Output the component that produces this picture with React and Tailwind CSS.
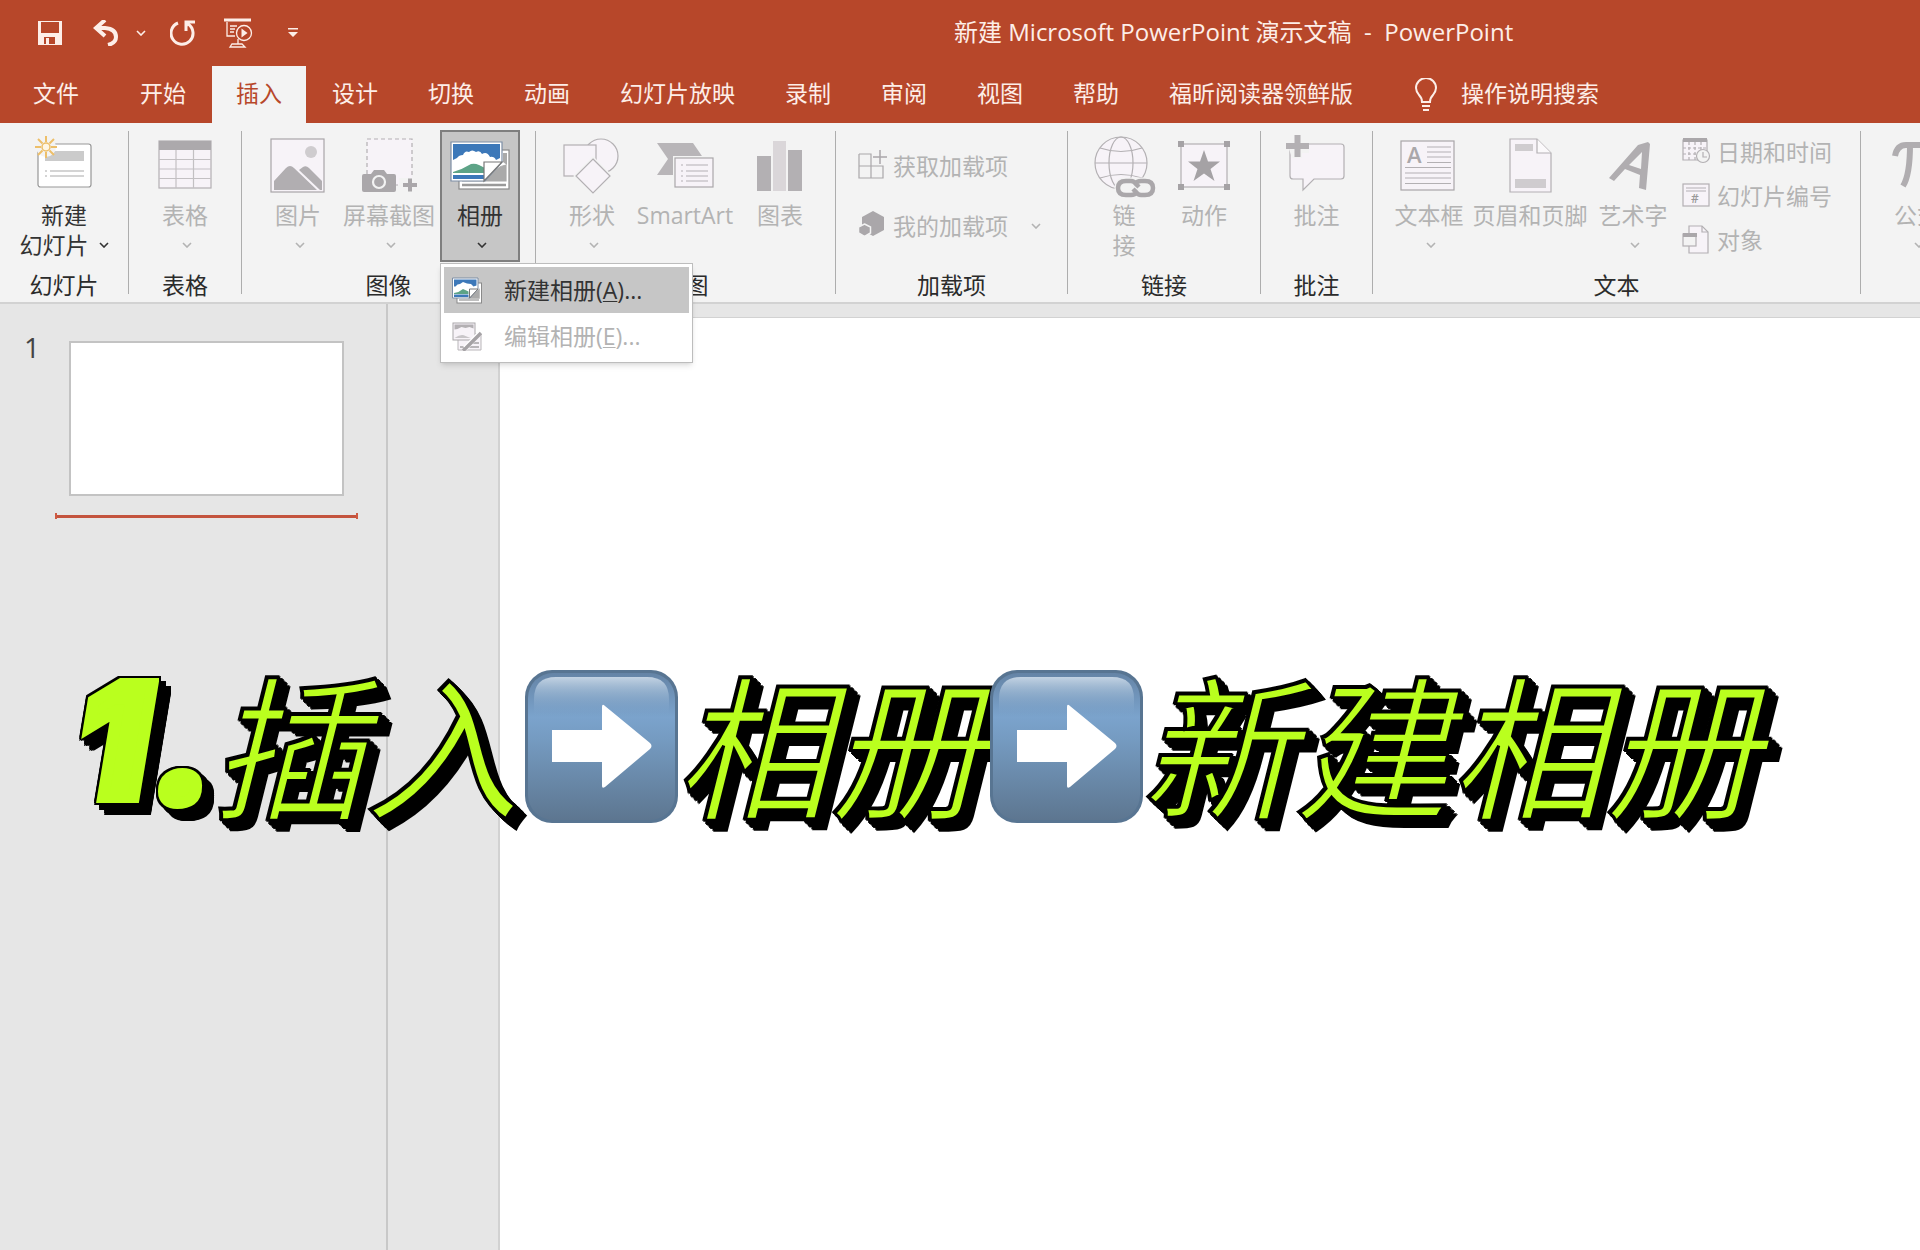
import clsx from 'clsx'

const Chevron = ({ className }) => (
    <svg viewBox="0 0 10 6" className={clsx('w-[10px] h-[6px] shrink-0', className)} fill="none" stroke="currentColor" strokeWidth="1.6">
        <path d="M1 1l4 4 4-4" />
    </svg>
)

const Icon = ({ children }) => (
    <svg viewBox="0 0 60 60" className="w-[60px] h-[60px] shrink-0 overflow-visible" fill="none" stroke="#b3b0b3" strokeWidth="1.2">
        {children}
    </svg>
)

const SmallIcon = ({ children }) => (
    <svg viewBox="0 0 30 30" className="w-[30px] h-[30px] shrink-0 overflow-visible" fill="none" stroke="#b3b0b3" strokeWidth="1.2">
        {children}
    </svg>
)

const NewSlideIcon = () => (
    <Icon>
        <rect x="4" y="8" width="53" height="43" rx="2.5" fill="#fff" stroke="#979797" />
        <path d="M11 15h39v10H11z" fill="#cbcbcb" stroke="none" />
        <path d="M16 35h34M16 40h34" stroke="#a9a9a9" />
        <path d="M11 35h2M11 40h2" stroke="#a9a9a9" />
        <circle cx="12" cy="11" r="10" fill="#f3f3f3" stroke="none" />
        <path d="M12 0v6M12 16v6M1 11h6M17 11h6M4 3l4.500 4.500M15.500 14.500L20 19M20 3l-4.500 4.500M8.500 14.500L4 19" stroke="#edbf6a" strokeWidth="2" />
        <circle cx="12" cy="11" r="4" fill="#fff6e4" stroke="#edbf6a" strokeWidth="1.500" />
    </Icon>
)

const TableIcon = () => (
    <Icon>
        <rect x="4" y="5" width="52" height="47" fill="#f7f3f8" />
        <path d="M4 5h52v9H4z" fill="#aca9ac" stroke="none" />
        <path d="M21 14v38M38.500 14v38M4 23.500h52M4 33h52M4 42.500h52" stroke="#c3c0c3" />
    </Icon>
)

const PictureIcon = () => (
    <Icon>
        <rect x="3" y="3" width="53" height="53" fill="#f7f3f8" stroke="#a9a6a9" />
        <circle cx="43" cy="16" r="6" fill="#cfcccf" stroke="none" />
        <path d="M6 54V45l12-13q4-4 8 0l23 22z" fill="#b1aeb1" stroke="none" />
        <path d="M31 34l4-3q3-2 6 1l13 13v9h-2z" fill="#b1aeb1" stroke="none" />
    </Icon>
)

const ScreenshotIcon = () => (
    <Icon>
        <path d="M8 3h45v46H8z" fill="#f7f3f8" strokeDasharray="4 3" />
        <path d="M5 38h7l3-4h10l3 4h7q2 0 2 2v14q0 2-2 2H5q-2 0-2-2V40q0-2 2-2z" fill="#aaa7aa" stroke="none" />
        <circle cx="20" cy="46" r="6" stroke="#f3f3f3" strokeWidth="2.200" />
        <path d="M40 42h20v14H40z" fill="#f3f3f3" stroke="none" />
        <path d="M51 42.500v13M44 49h14" stroke="#aaa7aa" strokeWidth="4" />
    </Icon>
)

const AlbumIcon = () => (
    <Icon>
        <rect x="9" y="14" width="50" height="39" fill="#fff" stroke="#8a8a8a" />
        <path d="M12 45h44M36 45q10-15 20-16v16z" fill="#aaa" stroke="#aaa" />
        <path d="M12 49h44" stroke="#999" strokeWidth="2.500" />
        <path d="M53 17h4v12l-4-3z" fill="#aaa" stroke="none" />
        <path d="M1 6h51v20L35 45H1z" fill="#fff" stroke="#7c8ea5" />
        <path d="M3 8h47v14l-4 2q-2-4-6-3-3-6-8-3-2-4-6-2-4-3-7 0-4-2-6 3-4 0-6 3l-4 2z" fill="#3c78b9" stroke="none" />
        <path d="M3 36q10-3 18-8 4-1 8 1l6 3v5H3z" fill="#5da387" stroke="none" />
        <path d="M3 39h31v4H3z" fill="#3c78b9" stroke="none" />
        <path d="M34 26h18L34 45z" fill="#fff" stroke="#777" />
    </Icon>
)

const ShapesIcon = () => (
    <Icon>
        <circle cx="39" cy="20" r="17" fill="#f7f3f8" />
        <rect x="2" y="9" width="32" height="31" fill="#f7f3f8" />
        <path d="M31 23l17 17-17 17-17-17z" fill="#f7f3f8" stroke="#f3f3f3" strokeWidth="4" />
        <path d="M31 23l17 17-17 17-17-17z" fill="#f7f3f8" />
    </Icon>
)

const SmartArtIcon = () => (
    <Icon>
        <path d="M2 7h36l11 16-11 16H2l11-16z" fill="#b8b5b8" stroke="none" />
        <rect x="20" y="22" width="38" height="29" fill="#f7f3f8" stroke="#f3f3f3" strokeWidth="4" />
        <rect x="20" y="22" width="38" height="29" fill="#f7f3f8" stroke="#aaa7aa" />
        <path d="M26 29h2M31 29h22M26 35h2M31 35h22M26 40h2M31 40h22M26 45h2M31 45h22" />
    </Icon>
)

const ChartIcon = () => (
    <Icon>
        <path d="M7 20h14v35H7zM38 14h14v41H38z" fill="#b3b0b3" stroke="none" />
        <path d="M23 5h13v50H23z" fill="#dad6d9" stroke="none" />
    </Icon>
)

const GlobeIcon = () => (
    <Icon>
        <circle cx="27" cy="27" r="26" fill="#f7f3f8" />
        <ellipse cx="27" cy="27" rx="12" ry="26" />
        <path d="M1 27h52M6 12q21 7 42 0M6 42q21-7 42 0" />
        <path d="M31 43h21q8 0 8 9t-8 9H31q-9 0-9-9t9-9z" fill="#f3f3f3" stroke="#f3f3f3" strokeWidth="3" />
        <path d="M43 56q-2 3-6 3h-5q-8 0-8-7t8-7h5q3 0 5 3l3 3" stroke="#aaa7aa" strokeWidth="4.500" />
        <path d="M41 48q2-3 6-3h4q8 0 8 7t-8 7h-4q-3 0-5-3l-3-3" stroke="#aaa7aa" strokeWidth="4.500" />
    </Icon>
)

const ActionIcon = () => (
    <Icon>
        <rect x="7" y="8" width="46" height="43" fill="#f7f3f8" />
        <path d="M4 5h6v6H4zM50 5h6v6h-6zM4 48h6v6H4zM50 48h6v6h-6z" fill="#a5a2a5" stroke="none" />
        <path d="M30 14l4 11.500h12l-9.500 7.500 4 12L30 37.500 19.500 45l4-12L14 25.500h12z" fill="#a5a2a5" stroke="none" />
    </Icon>
)

const CommentIcon = () => (
    <Icon>
        <path d="M6 8h48q3 0 3 3v29q0 3-3 3H27L16 54V43H6q-3 0-3-3V11q0-3 3-3z" fill="#f7f3f8" />
        <path d="M-1 4h7v-6h9v6h7v13h-7v5H5z" fill="#f3f3f3" stroke="none" />
        <path d="M10.500-1v22M-1 10h23" stroke="#b3b0b3" strokeWidth="6" />
    </Icon>
)

const TextBoxIcon = () => (
    <Icon>
        <rect x="2" y="5" width="53" height="49" fill="#f7f3f8" stroke="#a9a6a9" />
        <text x="8" y="27" fontSize="22" fill="#aaa7aa" stroke="none" className="font-['Open_Sans'] font-semibold">A</text>
        <path d="M28 11h24M28 16h24M28 21h24M28 26.500h24M6 31.500h46M6 37h46M6 42h46M6 47.500h46" />
    </Icon>
)

const HeaderFooterIcon = () => (
    <Icon>
        <path d="M10 3h27l14 14v39H10z" fill="#f7f3f8" />
        <path d="M37 3v14h14" fill="#fbf9fb" />
        <path d="M15 8h18v7H15zM15 43h31v9H15z" fill="#cfcccf" stroke="none" />
    </Icon>
)

const WordArtIcon = () => (
    <Icon>
        <path d="M6 42l29-33 10-3 2 2-4 46-7-2 1-13-15-6-11 12zM26 29l12 4 1-17z" fill="#b0adb0" fillRule="evenodd" stroke="none" />
    </Icon>
)

const EquationIcon = () => (
    <Icon>
        <path d="M8 20q2-11 11-11h36M23 9q0 30-7 41M42 9q-3 30 1 36 4 5 10-2" stroke="#b0adb0" strokeWidth="6" />
    </Icon>
)

const GetAddinsIcon = () => (
    <SmallIcon>
        <path d="M1 3h12v24M1 3v24h24V15H1" stroke="#aaa7aa" />
        <path d="M22-1v14M15 6h14" stroke="#aaa7aa" strokeWidth="1.500" />
    </SmallIcon>
)

const MyAddinsIcon = () => (
    <SmallIcon>
        <path d="M15 0l11 6v13l-11 6-11-6V6z" fill="#aaa7aa" stroke="none" />
        <path d="M6.500 13l6 3v6l-6 3.500-6-3.500v-6z" fill="#aaa7aa" stroke="#f3f3f3" strokeWidth="1.500" />
    </SmallIcon>
)

const DateIcon = () => (
    <SmallIcon>
        <path d="M1 3h24v20H1z" fill="#f7f3f8" />
        <path d="M1 1h24v4H1z" fill="#aaa7aa" stroke="none" />
        <path d="M7 5v18M13 5v18M19 5v18M1 11h24M1 17h24" strokeDasharray="3 2" />
        <circle cx="21" cy="19" r="6.500" fill="#f3f3f3" />
        <path d="M21 15v5h4" />
    </SmallIcon>
)

const SlideNumberIcon = () => (
    <SmallIcon>
        <rect x="1" y="3" width="26" height="22" fill="#f7f3f8" />
        <path d="M4 7h20M4 10h20" />
        <text x="9" y="22" fontSize="12" fill="#999" stroke="none" className="font-['Open_Sans'] font-semibold">#</text>
    </SmallIcon>
)

const ObjectIcon = () => (
    <SmallIcon>
        <path d="M7 10V1h13l6 6v21H7v-7" fill="#f7f3f8" />
        <path d="M20 1v6h6" />
        <rect x="1" y="9" width="13" height="12" fill="#f3f3f3" />
        <path d="M1 8h14v4H1z" fill="#aaa7aa" stroke="none" />
    </SmallIcon>
)

const NewAlbumIcon = () => (
    <svg viewBox="0 0 60 60" className="w-[30px] h-[30px] shrink-0" fill="none">
        <rect x="10" y="16" width="49" height="40" fill="#fff" stroke="#8a8a8a" strokeWidth="2" />
        <path d="M14 50h40M36 46l18-16v16z" fill="#aaa" stroke="#aaa" strokeWidth="3" />
        <path d="M1 6h51v22L36 46H1z" fill="#fff" stroke="#7c8ea5" strokeWidth="2" />
        <path d="M4 9h45v12l-6 2-5-5-8-1-8-3-6 4-5 1-4 4H4z" fill="#3c78b9" />
        <path d="M4 36q10-1 18-8l11 5v5H4z" fill="#5da387" />
        <path d="M4 39h29v5H4z" fill="#3c78b9" />
        <path d="M35 28h17L35 46z" fill="#fff" stroke="#777" strokeWidth="2" />
    </svg>
)

const EditAlbumIcon = () => (
    <svg viewBox="0 0 60 60" className="w-[30px] h-[30px] shrink-0" fill="none">
        <path d="M12 26h46v32H12z" fill="#f7f3f8" stroke="#b9b6b9" strokeWidth="2" />
        <path d="M16 52h38M40 44h14" stroke="#b9b6b9" strokeWidth="4" />
        <rect x="2" y="4" width="44" height="34" fill="#f7f3f8" stroke="#aaa7aa" strokeWidth="2" />
        <path d="M5 7h38v8l-8-3-8 2-8-2-8 4-6 1z" fill="#b3b0b3" />
        <path d="M5 34q14-10 22-4l10 4z" fill="#c9c6c9" />
        <path d="M56 24L26 55" stroke="#fff" strokeWidth="10" />
        <path d="M58 24L28 54l-6 5" stroke="#a5a2a5" strokeWidth="7" />
    </svg>
)

const ToolButton = ({ icon, lines, width, arrow, inlineArrow, active, enabled }) => (
    <button
        disabled={!enabled}
        className={clsx(
            'flex flex-col items-center h-[132px] pt-1 border-2 leading-[30px] whitespace-nowrap shrink-0',
            width,
            active ? 'bg-[#c6c6c6] border-[#7f7f7f]' : 'border-transparent',
            enabled ? 'text-[#333]' : 'text-[#b3b3b3]'
        )}
    >
        {icon}
        <span className="mt-1">{lines[0]}</span>
        {lines[1] && (
            <span className="flex items-center gap-[10px]">
                {lines[1]}
                {inlineArrow && <Chevron />}
            </span>
        )}
        {arrow && <Chevron className="ml-1 mt-3" />}
    </button>
)

const RowButton = ({ icon, label, height, arrow }) => (
    <button disabled className={clsx('flex items-center gap-[5px] text-[#b3b3b3] whitespace-nowrap', height)}>
        {icon}
        {label}
        {arrow && <Chevron className="ml-[18px]" />}
    </button>
)

const Group = ({ label, width, className, children }) => (
    <>
        <section aria-label={label} className={clsx('flex flex-col justify-between shrink-0 pt-[7px] pb-[5px]', width)}>
            <div className={clsx('flex', className)}>{children}</div>
            <div className="text-center text-[#2b2b2b] leading-6">{label}</div>
        </section>
        <div className="w-px my-2 bg-[#adadad] shrink-0" />
    </>
)

const tabs = ['开始', '插入', '设计', '切换', '动画', '幻灯片放映', '录制', '审阅', '视图', '帮助', '福昕阅读器领鲜版']

const TitleBar = () => (
    <div className="flex items-center h-[66px] pl-[37px] text-[#fdeee8]">
        <button aria-label="保存">
            <svg viewBox="0 0 26 26" className="w-[26px] h-[26px]" fill="none">
                <path d="M1 1h24v24H1z" fill="#fdeee8" />
                <path d="M4 2h18v11H4zM7 17h11v7H7z" fill="#b7472a" />
                <path d="M9 18h3v6H9z" fill="#fdeee8" />
            </svg>
        </button>
        <button aria-label="撤消" className="ml-[30px]">
            <svg viewBox="0 0 26 26" className="w-[26px] h-[26px]" fill="none" stroke="currentColor" strokeWidth="4">
                <path d="M12 0L3 8l9 8M3 8h9q11 1 11 9 0 6-8 8" />
            </svg>
        </button>
        <button aria-label="撤消选项" className="ml-[17px]">
            <Chevron />
        </button>
        <button aria-label="重复" className="ml-6">
            <svg viewBox="0 0 26 26" className="w-[26px] h-[26px]" fill="none" stroke="currentColor" strokeWidth="3">
                <path d="M8 3A11 11 0 1 0 18 4" />
                <path d="M16 11V2h9" />
                <path d="M15 1h7l-7 8z" fill="currentColor" stroke="none" />
            </svg>
        </button>
        <button aria-label="从头开始" className="ml-7">
            <svg viewBox="0 0 30 30" className="w-[30px] h-[30px]" fill="none" stroke="currentColor" strokeWidth="1.300">
                <path d="M0 2h27" strokeWidth="3" />
                <path d="M3 4v14h8M6 8h7M6 11h5M6 14h4M14 21v5M6 29l2-3h10l3 3z" />
                <circle cx="20" cy="15" r="7.500" />
                <path d="M17.500 10.500v9l6-4.500z" fill="currentColor" stroke="none" />
            </svg>
        </button>
        <button aria-label="自定义快速访问工具栏" className="ml-[34px]">
            <svg viewBox="0 0 10 10" className="w-[10px] h-[10px]" fill="currentColor">
                <path d="M0 0h10v1.500H0zM0 4h10L5 9z" />
            </svg>
        </button>
        <h1 className="ml-[656px] text-2xl leading-8 pb-[2px] whitespace-pre">新建 Microsoft PowerPoint 演示文稿  -  PowerPoint</h1>
    </div>
)

const TabBar = () => (
    <div className="flex gap-[2px] h-[57px] text-[#fdeee8] whitespace-nowrap">
        <button className="pl-[33px] pr-[35px] pb-[2px]">文件</button>
        {tabs.map(tab => (
            <button key={tab} className={clsx('px-6 pb-[2px]', tab === '插入' && 'bg-[#f3f3f3] text-[#b7472a]')}>
                {tab}
            </button>
        ))}
        <label className="flex items-center gap-6 pl-9">
            <svg viewBox="0 0 22 34" className="w-[22px] h-[34px]" fill="none" stroke="currentColor" strokeWidth="2">
                <path d="M7 24q0-4-3-7-3-4-3-7a10 10 0 0 1 20 0q0 3-3 7-3 3-3 7zM7 28h8M8 32h6" />
            </svg>
            <input
                type="text"
                aria-label="操作说明搜索"
                placeholder="操作说明搜索"
                className="w-40 pb-[2px] bg-transparent outline-none placeholder:text-[#fdeee8] placeholder:opacity-100"
            />
        </label>
    </div>
)

const AlbumMenu = () => (
    <div role="menu" className="absolute top-[133px] left-0 z-20 w-[253px] p-[3px] bg-white border border-[#bdbdbd] shadow-md">
        <button role="menuitem" className="flex items-center w-full h-[46px] pl-2 gap-[22px] bg-[#c6c6c6] text-[#333] whitespace-nowrap">
            <NewAlbumIcon />
            <span>新建相册(<u className="underline-offset-2 decoration-1">A</u>)...</span>
        </button>
        <button role="menuitem" disabled className="flex items-center w-full h-[46px] pl-2 gap-[22px] text-[#b3b3b3] whitespace-nowrap">
            <EditAlbumIcon />
            <span>编辑相册(<u className="underline-offset-2 decoration-1">E</u>)...</span>
        </button>
    </div>
)

const Ribbon = () => (
    <div className="flex h-[181px] bg-[#f3f3f3] border-b-2 border-[#d2d2d2]">
        <Group label="幻灯片" width="w-[128px]" className="justify-center">
            <ToolButton icon={<NewSlideIcon />} lines={['新建', '幻灯片']} width="w-[126px]" inlineArrow enabled />
        </Group>
        <Group label="表格" width="w-[112px]" className="justify-center">
            <ToolButton icon={<TableIcon />} lines={['表格']} width="w-20" arrow />
        </Group>
        <Group label="图像" width="w-[293px]" className="pl-4 gap-[3px]">
            <ToolButton icon={<PictureIcon />} lines={['图片']} width="w-20" arrow />
            <ToolButton icon={<ScreenshotIcon />} lines={['屏幕截图']} width="w-24" arrow />
            <div className="relative">
                <ToolButton icon={<AlbumIcon />} lines={['相册']} width="w-20" arrow active enabled />
                <AlbumMenu />
            </div>
        </Group>
        <Group label="插图" width="w-[299px]" className="pl-4 gap-[3px]">
            <ToolButton icon={<ShapesIcon />} lines={['形状']} width="w-20" arrow />
            <ToolButton icon={<SmartArtIcon />} lines={['SmartArt']} width="w-[100px]" />
            <ToolButton icon={<ChartIcon />} lines={['图表']} width="w-[84px]" />
        </Group>
        <Group label="加载项" width="w-[231px]" className="flex-col pl-[22px] pt-[6px]">
            <RowButton icon={<GetAddinsIcon />} label="获取加载项" height="h-[60px]" />
            <RowButton icon={<MyAddinsIcon />} label="我的加载项" height="h-[60px]" arrow />
        </Group>
        <Group label="链接" width="w-[192px]" className="pl-4">
            <ToolButton icon={<GlobeIcon />} lines={['链', '接']} width="w-20" />
            <ToolButton icon={<ActionIcon />} lines={['动作']} width="w-20" />
        </Group>
        <Group label="批注" width="w-[111px]" className="justify-center">
            <ToolButton icon={<CommentIcon />} lines={['批注']} width="w-20" />
        </Group>
        <Group label="文本" width="w-[487px]" className="pl-4 gap-[3px]">
            <ToolButton icon={<TextBoxIcon />} lines={['文本框']} width="w-20" arrow />
            <ToolButton icon={<HeaderFooterIcon />} lines={['页眉和页脚']} width="w-[116px]" />
            <ToolButton icon={<WordArtIcon />} lines={['艺术字']} width="w-[84px]" arrow />
            <div className="flex flex-col pl-1">
                <RowButton icon={<DateIcon />} label="日期和时间" height="h-11" />
                <RowButton icon={<SlideNumberIcon />} label="幻灯片编号" height="h-11" />
                <RowButton icon={<ObjectIcon />} label="对象" height="h-11" />
            </div>
        </Group>
        <div className="flex flex-1 min-w-0 pt-[7px] pl-4 overflow-hidden">
            <ToolButton icon={<EquationIcon />} lines={['公式']} width="w-20" arrow />
        </div>
    </div>
)

const ArrowBadge = () => (
    <svg viewBox="0 0 155 155" role="img" aria-label="➡" className="relative w-[155px] h-[155px] shrink-0">
        <defs>
            <linearGradient id="badge" x1="0" y1="0" x2="0" y2="1">
                <stop offset="0" stopColor="#6584a6" />
                <stop offset="0.300" stopColor="#7ba3cc" />
                <stop offset="0.450" stopColor="#759bc1" />
                <stop offset="1" stopColor="#5d7690" />
            </linearGradient>
            <linearGradient id="gloss" x1="0" y1="0" x2="0" y2="1">
                <stop offset="0" stopColor="#c3d3e3" />
                <stop offset="1" stopColor="#7aa2cb" stopOpacity="0" />
            </linearGradient>
        </defs>
        <rect x="1" y="1" width="153" height="153" rx="27" fill="#587592" />
        <rect x="4" y="4" width="147" height="147" rx="25" fill="url(#badge)" />
        <path d="M10 48V30Q10 8 32 8H123Q145 8 145 30V48z" fill="url(#gloss)" />
        <path d="M28 61H78V38q0-4 3-1L126 74q3 3 0 6L81 118q-3 2-3-1V93H28z" fill="#fff" />
    </svg>
)

const captionText =
    "pb-3 -ml-1 mr-1 font-['Noto_Sans_CJK_SC',sans-serif] text-[#baff1e] [-webkit-text-stroke:3px_#000] [filter:drop-shadow(-1px_-1px_0_#000)_drop-shadow(3px_3px_0_#000)_drop-shadow(3px_3px_0_#000)_drop-shadow(4px_4px_0_#000)]"

// the number is heavier than the rest, so its stroke has the fill colour and the outline comes from the filter
const numberText = 'pb-3 text-[#baff1e] [-webkit-text-stroke:12px_#baff1e]'

const numberShadow =
    '[filter:drop-shadow(-2px_0_0_#000)_drop-shadow(2px_0_0_#000)_drop-shadow(0_-2px_0_#000)_drop-shadow(0_2px_0_#000)_drop-shadow(5px_5px_0_#000)_drop-shadow(5px_5px_0_#000)]'

const Caption = () => (
    <p className="absolute top-[359px] left-[70px] flex items-center text-[155px] leading-[155px] italic whitespace-nowrap pointer-events-none">
        <span className="flex gap-4 w-36 pl-2">
            <span className={clsx("font-['Inter',sans-serif] font-black", numberText, numberShadow)}>1</span>
            <span className={clsx("font-['Open_Sans',sans-serif] font-extrabold", numberText, numberShadow)}>.</span>
        </span>
        <span className={captionText}>插入</span>
        <ArrowBadge />
        <span className={captionText}>相册</span>
        <ArrowBadge />
        <span className={captionText}>新建相册</span>
    </p>
)

const SlidePanel = () => (
    <aside className="w-[388px] shrink-0 border-r-2 border-[#c8c8c8] pt-[37px]">
        <div className="flex">
            <span className="w-[69px] pl-6 -mt-[10px] text-[28px] leading-8 text-[#444]">1</span>
            <button aria-label="幻灯片 1" className="w-[275px] h-[155px] bg-white border-2 border-[#c3c3c3]" />
        </div>
        <div className="ml-[55px] mt-[17px] w-[303px] h-[6px] flex items-center border-x-2 border-[#cf5a42]">
            <div className="w-full h-[3px] bg-[#c4543e]" />
        </div>
    </aside>
)

export default function App() {
    return (
        <div className="flex flex-col min-h-screen bg-[#e6e6e6] text-[23px] font-['Open_Sans','Noto_Sans_CJK_SC',sans-serif]">
            <header className="bg-[#b7472a]">
                <TitleBar />
                <TabBar />
            </header>
            <Ribbon />
            <main className="relative flex flex-1">
                <SlidePanel />
                <div className="flex-1 ml-[110px] mt-[13px] bg-white border-l-2 border-t border-[#d2d2d2]" />
                <Caption />
            </main>
        </div>
    )
}
